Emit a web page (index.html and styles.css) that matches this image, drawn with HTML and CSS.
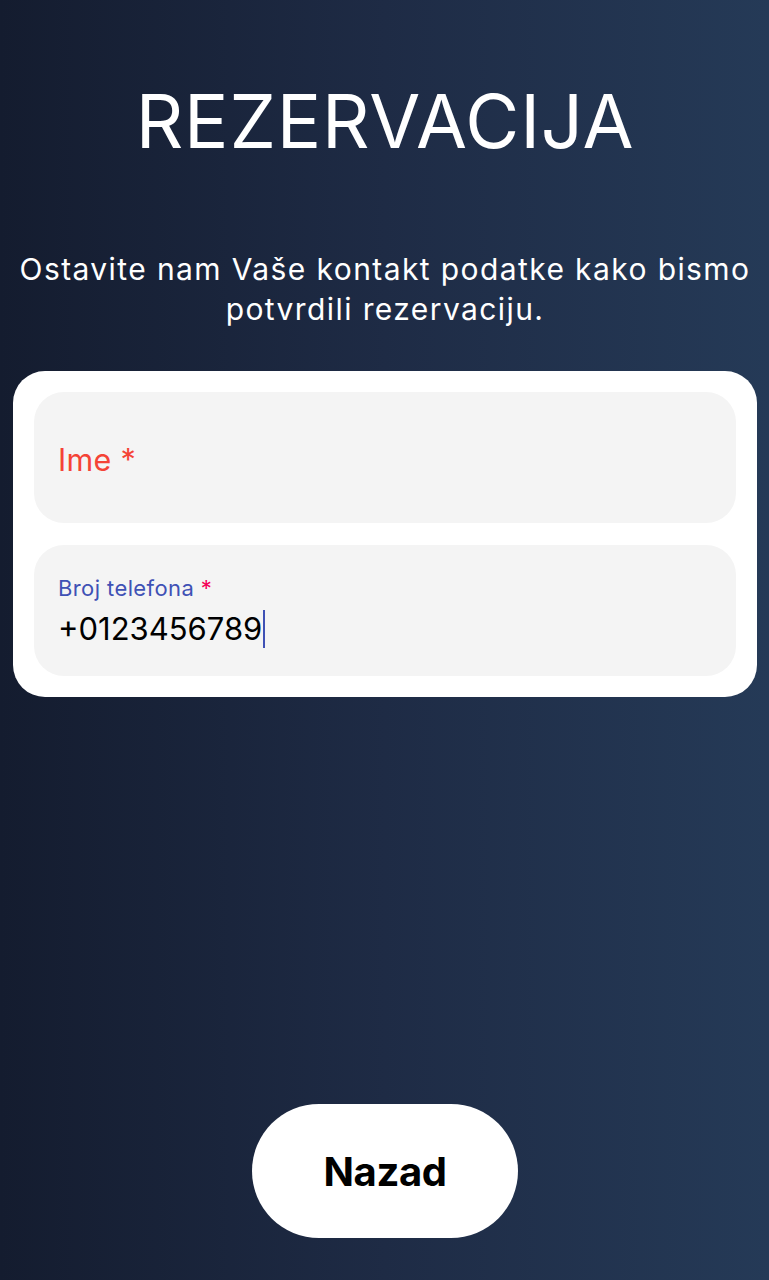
FILE: index.html
```html
<!DOCTYPE html>
<html lang="hr">
<head>
<meta charset="utf-8">
<title>Rezervacija</title>
<link rel="stylesheet" href="styles.css">
</head>
<body>
<main class="page">
  <h1 class="title">REZERVACIJA</h1>
  <p class="subtitle">Ostavite nam Vaše kontakt podatke kako bismo potvrdili rezervaciju.</p>
  <form class="card">
    <div class="field field-empty">
      <span class="label-big">Ime <span class="req">*</span></span>
    </div>
    <div class="field field-filled">
      <span class="label-small">Broj telefona <span class="req-pink">*</span></span>
      <span class="value">+0123456789<span class="caret"></span></span>
    </div>
  </form>
  <div class="spacer"></div>
  <div class="actions">
    <button type="button" class="btn">Nazad</button>
  </div>
</main>
</body>
</html>
```
FILE: styles.css
```css
html, body {
  margin: 0;
  padding: 0;
  height: 100%;
}
body {
  font-family: Inter, "Noto Sans", sans-serif;
  background: linear-gradient(90deg, #141c2f 0%, #1e2b45 50%, #253a57 100%);
  color: #fff;
}
.page {
  min-height: 100vh;
  box-sizing: border-box;
  display: flex;
  flex-direction: column;
  padding: 84px 12px 42px 13px;
}
.title {
  margin: 0;
  font-size: 74px;
  line-height: 74px;
  font-weight: 400;
  text-align: center;
  letter-spacing: 0.8px;
}
.subtitle {
  margin: 91px -6px 0;
  font-size: 30px;
  line-height: 40px;
  text-align: center;
  letter-spacing: 1.4px;
}
.card {
  margin-top: 42px;
  background: #fff;
  border-radius: 32px;
  padding: 21px;
  display: flex;
  flex-direction: column;
  gap: 22px;
}
.field {
  height: 131px;
  box-sizing: border-box;
  background: #f4f4f4;
  border-radius: 30px;
  padding: 0 24px;
  display: flex;
  flex-direction: column;
}
.field-empty {
  justify-content: center;
}
.label-big {
  color: #f44336;
  font-size: 30.5px;
  line-height: 34px;
  padding-top: 4px;
  letter-spacing: 0.3px;
}
.req {
  color: #f44336;
}
.field-filled {
  padding-top: 30px;
}
.label-small {
  color: #3f51b5;
  font-size: 22px;
  line-height: 26px;
  letter-spacing: 0.4px;
}
.req-pink {
  color: #f50057;
}
.value {
  color: #000;
  font-size: 31px;
  line-height: 38px;
  margin-top: 9px;
  display: flex;
  align-items: center;
}
.caret {
  display: inline-block;
  width: 2px;
  height: 38px;
  background: #3f51b5;
  margin-left: 1px;
}
.spacer {
  flex: 1;
}
.actions {
  display: flex;
  justify-content: center;
}
.btn {
  width: 266px;
  height: 134px;
  border: 0;
  border-radius: 67px;
  background: #fff;
  color: #000;
  font-family: Inter, "Noto Sans", sans-serif;
  font-size: 40px;
  font-weight: 700;
  letter-spacing: -0.4px;
  cursor: pointer;
}
```
